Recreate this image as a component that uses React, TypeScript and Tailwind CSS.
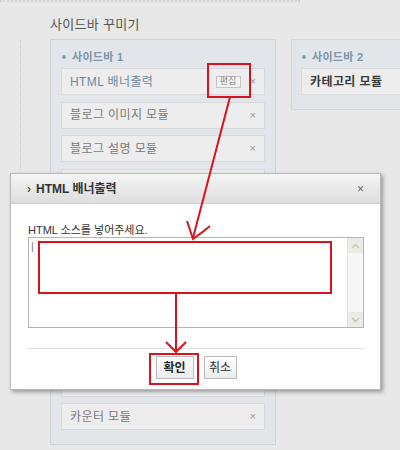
const font = { fontFamily: '"Liberation Sans", "Noto Sans CJK KR", sans-serif' };

type Item = { label: string; active?: boolean; edit?: boolean };

// rows 4-10 sit under the dialog, so they carry no text
const sidebarOne: Item[] = [
  { label: 'HTML 배너출력', active: true, edit: true },
  { label: '블로그 이미지 모듈' },
  { label: '블로그 설명 모듈' },
  { label: '' },
  { label: '' },
  { label: '' },
  { label: '' },
  { label: '' },
  { label: '' },
  { label: '' },
  { label: '카운터 모듈' },
];

function ModuleRow({ item }: { item: Item }) {
  return (
    <div className="h-[27px] shrink-0 flex items-center pl-[8px] pr-[8px] bg-[#ededed] border border-[#d7d9dc]">
      {item.label && (
        <>
          <span
            className={
              'text-[12px] tracking-[0.4px] ' + (item.active ? 'text-[#6b87a0]' : 'text-[#7a7a7a]')
            }
          >
            {item.label}
          </span>
          <div className="ml-auto flex items-center gap-[9px]">
            {item.edit && (
              <span className="h-[12px] w-[25px] flex items-center justify-center border border-[#c4c4c4] bg-[#f3f3f3] text-[9px] leading-none text-[#888]">
                편집
              </span>
            )}
            <span className="text-[11px] leading-none text-[#9a9a9a]">×</span>
          </div>
        </>
      )}
    </div>
  );
}

function PanelHeader({ title }: { title: string }) {
  return (
    <div className="h-[14px] flex items-center gap-[6px] pl-[1px] mb-[4px]">
      <span className="w-[4px] h-[4px] rounded-full bg-[#8aa0b3]" />
      <span className="text-[11px] font-bold tracking-[0.3px] text-[#7d95aa]">{title}</span>
    </div>
  );
}

export default function App() {
  return (
    <div className="relative w-[400px] h-[450px] overflow-hidden bg-[#e8e8e8]" style={font}>
      <div className="w-[300px] border-t-2 border-dotted border-[#d2d2d2]" />

      <div className="flex">
        <div className="w-[21px] shrink-0">
          <div className="mt-[38px] h-[130px] border-r border-dotted border-[#c9c9c9]" />
        </div>

        <div className="ml-[29px] pt-[13px]">
          <div className="h-[20px] leading-[20px] text-[13px] text-[#555] tracking-[0.3px]">사이드바 꾸미기</div>

          <div className="mt-[4px] flex items-start gap-[15px]">
            {/* sidebar 1 */}
            <div className="w-[226px] shrink-0 bg-[#e2e6ea] border border-[#cfd4da] px-[10px] pt-[10px] pb-[14px]">
              <PanelHeader title="사이드바 1" />
              <div className="flex flex-col gap-[6.5px]">
                {sidebarOne.map((item, i) => (
                  <ModuleRow key={i} item={item} />
                ))}
              </div>
            </div>

            {/* sidebar 2 */}
            <div className="w-[150px] shrink-0 bg-[#e2e6ea] border border-[#d3d8dd] pl-[9px] pt-[10px] pb-[14px]">
              <PanelHeader title="사이드바 2" />
              <div className="h-[27px] flex items-center pl-[8px] bg-[#ededed] border border-[#d7d9dc]">
                <span className="text-[12px] tracking-[0.4px] text-[#3a3a3a] font-bold">카테고리 모듈</span>
              </div>
            </div>
          </div>
        </div>
      </div>

      {/* dialog */}
      <div className="absolute left-[10px] top-[173px] w-[371px] h-[217px] bg-white border border-[#b9b9b9] shadow-[2px_2px_4px_rgba(0,0,0,0.35)]">
        <div className="h-[30px] flex items-center pl-[16px] pr-[16px] bg-gradient-to-b from-[#f5f5f5] to-[#dddddd] border-b border-[#d0d0d0]">
          <span className="text-[12px] text-[#333] mr-[5px]">›</span>
          <span className="text-[12px] font-bold text-[#333]">HTML 배너출력</span>
          <span className="ml-auto text-[12px] text-[#666]">×</span>
        </div>

        <div className="pl-[17px] pr-[16px]">
          <div className="pt-[19px] h-[33px] leading-[14px] text-[11px] text-[#333]">HTML 소스를 넣어주세요.</div>
          <div className="h-[91px] flex border border-[#b4b4b4]">
            <div className="flex-1 pl-[2px] pt-[2px] text-[11px] leading-[12px] text-[#777]">|</div>
            <div className="w-[16px] flex flex-col justify-between bg-[#f7f7f7] border-l border-[#e2e2e2]">
              <div className="h-[15px] flex items-center justify-center bg-[#ecebe6] text-[#c9c3b0]">
                <svg width="9" height="6" viewBox="0 0 9 6">
                  <path d="M1 5 L4.5 1.5 L8 5" fill="none" stroke="currentColor" strokeWidth="1.3" />
                </svg>
              </div>
              <div className="h-[15px] flex items-center justify-center bg-[#ecebe6] text-[#c9c3b0]">
                <svg width="9" height="6" viewBox="0 0 9 6">
                  <path d="M1 1 L4.5 4.5 L8 1" fill="none" stroke="currentColor" strokeWidth="1.3" />
                </svg>
              </div>
            </div>
          </div>
          <div className="mt-[20px] border-t border-[#dedede]" />
          <div className="mt-[7px] flex justify-center gap-[10px]">
            <button className="h-[23px] w-[38px] border border-[#bcbcbc] bg-gradient-to-b from-white to-[#ececec] text-[12px] font-bold text-[#222]">
              확인
            </button>
            <button className="h-[23px] w-[33px] border border-[#bcbcbc] bg-gradient-to-b from-white to-[#ececec] text-[12px] text-[#333]">
              취소
            </button>
          </div>
        </div>
      </div>

      {/* red annotations */}
      <svg className="absolute inset-0 pointer-events-none" width="400" height="450" viewBox="0 0 400 450">
        <g fill="none" stroke="#d7141e" strokeWidth="2">
          <rect x="208" y="64" width="42" height="33" />
          <path d="M230 97 L193 238" />
          <path d="M187 221 L193 239 Q203 232 210 226" />
          <rect x="39" y="242" width="292" height="51" />
          <path d="M176 293 L176 352" />
          <path d="M166 342 L176 352 L186 342" />
          <rect x="150" y="354" width="48" height="30" />
        </g>
      </svg>
    </div>
  );
}
